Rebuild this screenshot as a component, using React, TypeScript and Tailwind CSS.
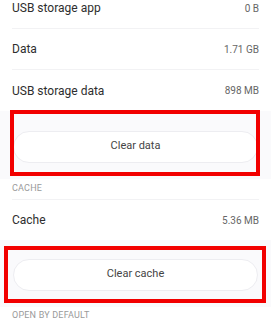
export default function App() {
  const rows1 = [
    { label: 'USB storage app', value: '0 B' },
    { label: 'Data', value: '1.71 GB' },
    { label: 'USB storage data', value: '898 MB' },
  ];

  return (
    <div className="relative w-[271px] h-[320px] overflow-hidden bg-white font-['Roboto',sans-serif]">
      <div className="-mt-[12px]">
        {/* Storage rows */}
        {rows1.map((row, i) => (
          <div
            key={row.label}
            className={`mx-3 h-[41px] flex items-center justify-between ${i < 2 ? 'border-b border-[#f2f2f4]' : ''}`}
          >
            <span className="text-[12px] text-[#2e2e2e]">{row.label}</span>
            <span className="text-[10px] text-[#666]">{row.value}</span>
          </div>
        ))}

        {/* Clear data */}
        <div className="h-[68px] bg-[#fafafc] flex items-center px-[13px] pt-[3px]">
          <button className="w-full h-[32px] rounded-full bg-white border border-[#ededf1] text-[11px] text-[#444]">
            Clear data
          </button>
        </div>

        {/* Cache header */}
        <div className="mx-3 h-[21px] flex items-center border-b border-[#f2f2f4]">
          <span className="text-[9px] text-[#9a9a9a] tracking-[0.2px]">CACHE</span>
        </div>

        <div className="mx-3 h-[40px] flex items-center justify-between">
          <span className="text-[12px] text-[#2e2e2e]">Cache</span>
          <span className="text-[10px] text-[#666]">5.36 MB</span>
        </div>

        {/* Clear cache */}
        <div className="h-[67px] bg-[#fafafc] flex items-center px-[13px] pt-[2px]">
          <button className="w-full h-[32px] rounded-full bg-white border border-[#ededf1] text-[11px] text-[#444]">
            Clear cache
          </button>
        </div>

        <div className="mx-3 h-[18px] flex items-center">
          <span className="text-[9px] text-[#9a9a9a] tracking-[0.2px]">OPEN BY DEFAULT</span>
        </div>
      </div>

      {/* Red annotation boxes */}
      <div className="absolute left-[10px] top-[110px] w-[250px] h-[66px] border-4 border-[#f20000]" />
      <div className="absolute left-[4px] top-[246px] w-[262px] h-[57px] border-4 border-[#f20000]" />
    </div>
  );
}
